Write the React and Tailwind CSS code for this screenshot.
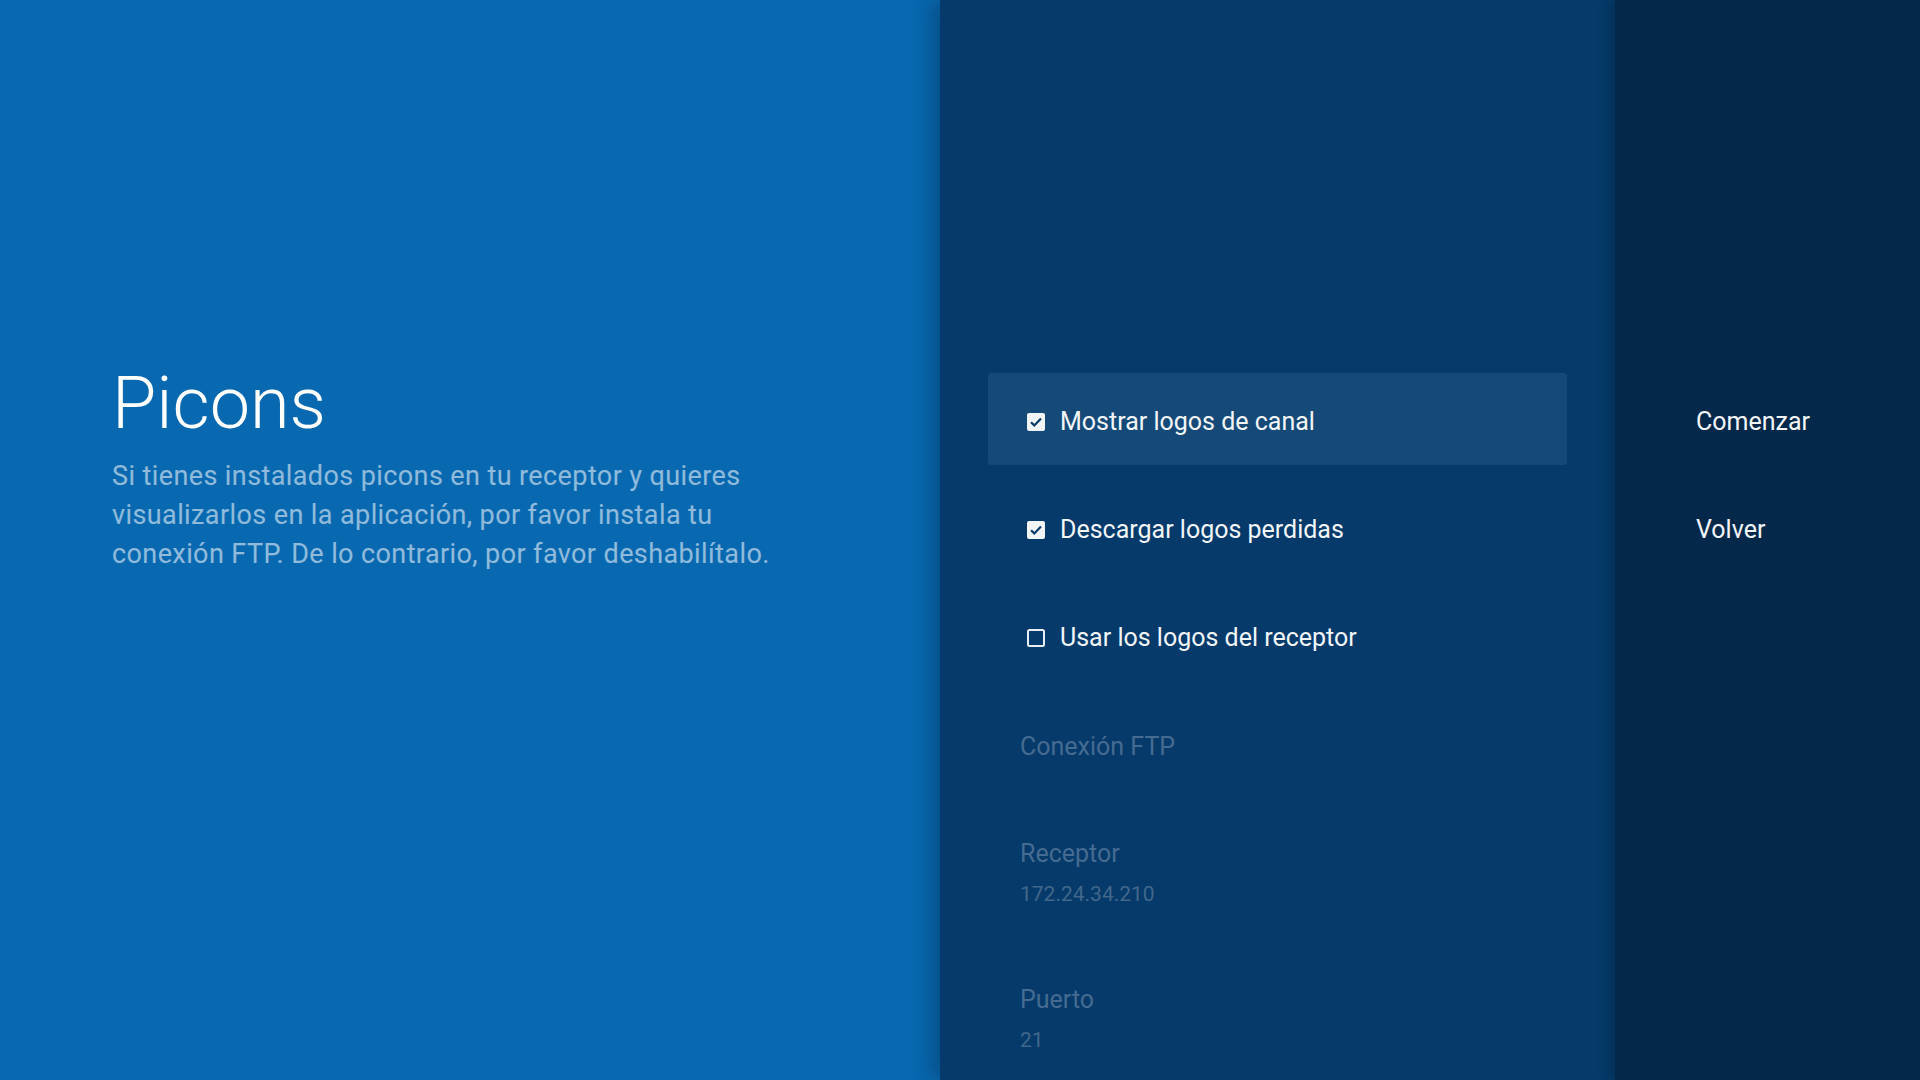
const options = [
  { label: "Mostrar logos de canal", checked: true, focused: true },
  { label: "Descargar logos perdidas", checked: true },
  { label: "Usar los logos del receptor", checked: false },
];

const fields = [
  { title: "Conexión FTP" },
  { title: "Receptor", value: "172.24.34.210" },
  { title: "Puerto", value: "21" },
];

const actions = ["Comenzar", "Volver"];

function CheckBox({ checked }) {
  if (checked) {
    return (
      <svg width="20" height="20" viewBox="0 0 20 20" className="shrink-0">
        <rect x="1" y="1" width="18" height="18" rx="2" fill="#f2f5f8" />
        <path d="M5 10.2l3.3 3.2L15 6.6" fill="none" stroke="#0b3a66" strokeWidth="2.2" />
      </svg>
    );
  }
  return (
    <svg width="20" height="20" viewBox="0 0 20 20" className="shrink-0">
      <rect x="2" y="2" width="16" height="16" rx="1.5" fill="none" stroke="#e8eef4" strokeWidth="2" />
    </svg>
  );
}

export default function App() {
  return (
    <div className="flex h-[1080px] w-[1920px] overflow-hidden font-['Roboto',sans-serif]">
      {/* description side */}
      <div className="w-[940px] shrink-0 bg-[#0868b0] pl-[112px] pt-[361px]">
        <h1 className="text-[72px] font-light leading-[86px] text-white">Picons</h1>
        <p className="mt-[10px] w-[680px] text-[27px] leading-[39px] tracking-[0.4px] text-white/55">
          Si tienes instalados picons en tu receptor y quieres visualizarlos en la aplicación, por
          favor instala tu conexión FTP. De lo contrario, por favor deshabilítalo.
        </p>
      </div>

      {/* settings list */}
      <div className="relative z-10 flex w-[675px] shrink-0 flex-col gap-4 bg-[#053a6a] px-12 pt-[373px] shadow-[-10px_0_18px_rgba(0,0,0,0.22)]">
        {options.map((o) => (
          <div
            key={o.label}
            className={`flex h-[92px] items-center gap-[14px] rounded-[4px] pl-[38px] pt-[6px] ${
              o.focused ? "bg-[#154a78]" : ""
            }`}
          >
            <CheckBox checked={o.checked} />
            <span className="text-[25px] text-[#f3f6f9]">{o.label}</span>
          </div>
        ))}
        {fields.map((f) => (
          <div
            key={f.title}
            className={`flex flex-col justify-center pl-[32px] pt-[8px] ${f.value ? "h-[130px]" : "h-[92px]"}`}
          >
            <span className="text-[25px] leading-[34px] text-[#456b91]">{f.title}</span>
            {f.value && (
              <span className="mt-[8px] text-[21px] leading-[30px] text-[#41678b]">{f.value}</span>
            )}
          </div>
        ))}
      </div>

      {/* actions */}
      <div className="relative z-20 flex flex-1 flex-col gap-4 bg-[#04284a] pl-[81px] pt-[373px] shadow-[-6px_0_12px_rgba(0,0,0,0.18)]">
        {actions.map((a) => (
          <div key={a} className="flex h-[92px] items-center pt-[6px]">
            <span className="text-[25px] text-[#f3f6f9]">{a}</span>
          </div>
        ))}
      </div>
    </div>
  );
}
